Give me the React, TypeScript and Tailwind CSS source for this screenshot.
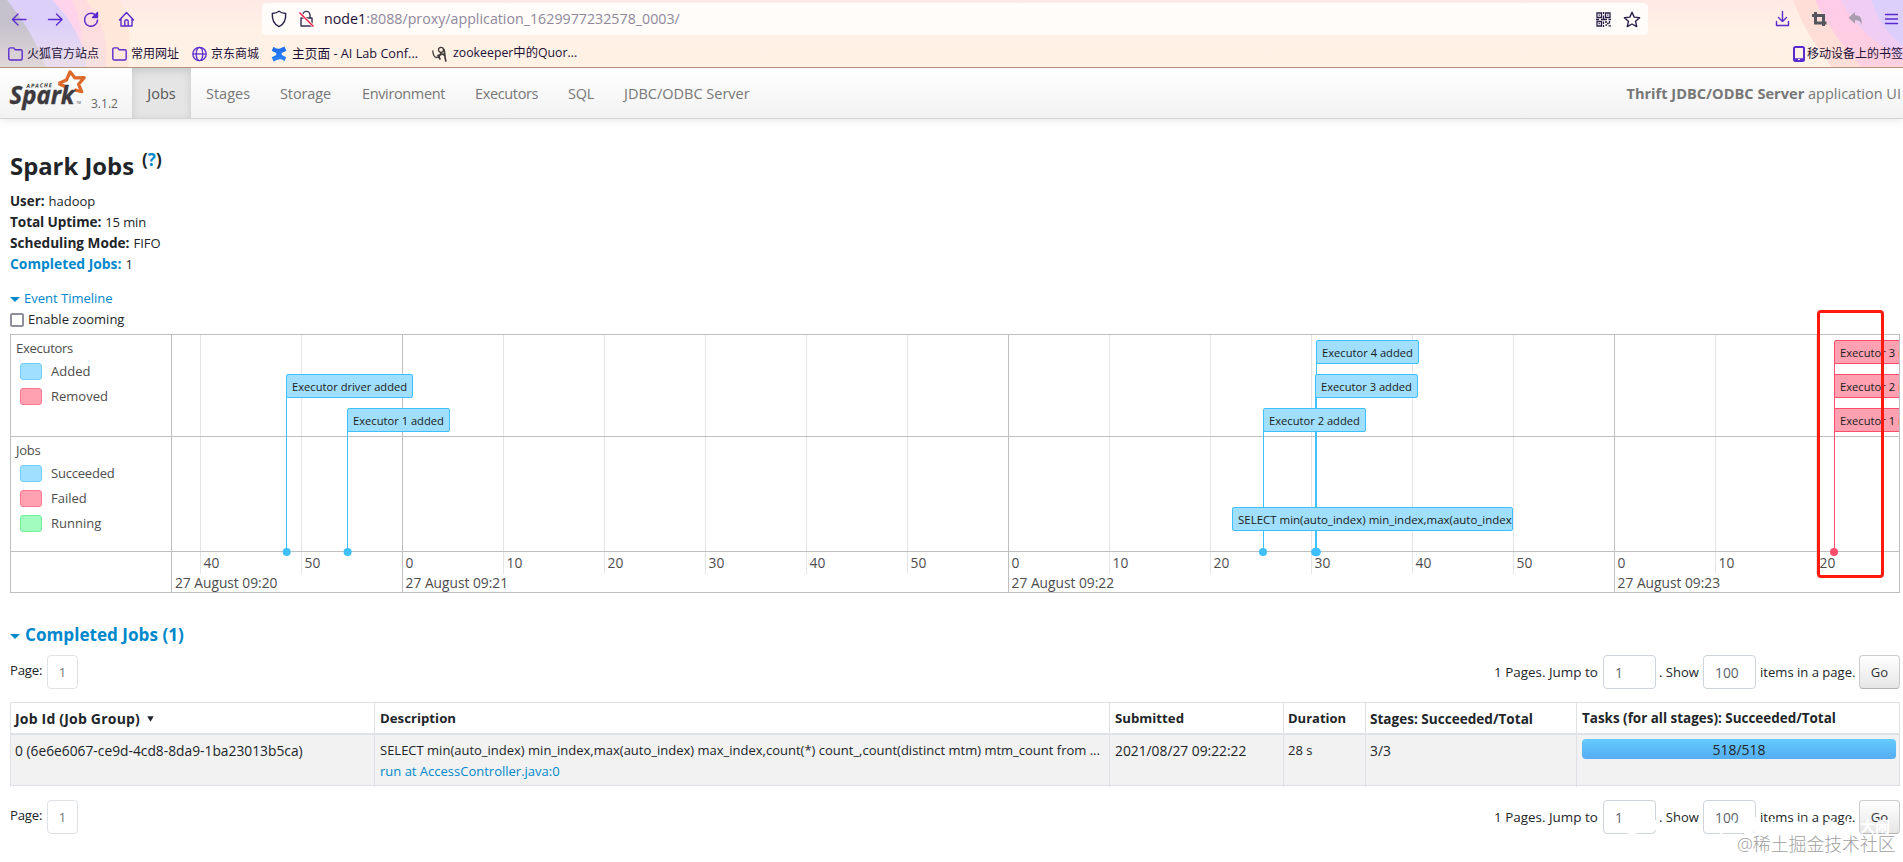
import React from 'react';

const SANS = `font-['Open_Sans','Noto_Sans_CJK_SC',sans-serif]`;

/* ---------- browser chrome ---------- */

function ChromeBackdrop() {
  return (
    <svg className="absolute inset-0" width="1903" height="67" viewBox="0 0 1903 67">
      <defs>
        <linearGradient id="base" x1="0" y1="0" x2="0" y2="1">
          <stop offset="0" stopColor="#ffe9e6" />
          <stop offset="0.45" stopColor="#fff1e5" />
          <stop offset="1" stopColor="#fff2e5" />
        </linearGradient>
        <linearGradient id="fade" x1="0" y1="0" x2="0" y2="1">
          <stop offset="0.35" stopColor="#f3e6df" stopOpacity="0" />
          <stop offset="1" stopColor="#f3e6df" stopOpacity="0.6" />
        </linearGradient>
        <linearGradient id="pinkR" x1="0" y1="0" x2="0" y2="1">
          <stop offset="0" stopColor="#ffcbe9" />
          <stop offset="1" stopColor="#ffd0de" />
        </linearGradient>
      </defs>
      <rect width="1903" height="67" fill="url(#base)" />
      <path d="M0 0H120Q134 34 128 67H0Z" fill="#ffe7d9" />
      <path d="M0 0H86Q112 34 105 67H0Z" fill="#ffdcdf" />
      <path d="M0 0H72Q84 26 84 67H0Z" fill="#ffd3ec" />
      <path d="M0 0H52Q82 30 87 67H0Z" fill="#dcd0fa" />
      <path d="M0 0H7Q32 30 46 67H0Z" fill="#c5c1cd" />
      <rect width="105" height="67" fill="url(#fade)" />
      <path d="M1793 0Q1806 36 1832 67H1903V0Z" fill="#ffded8" />
      <path d="M1815 0Q1832 36 1862 67H1903V0Z" fill="url(#pinkR)" />
      <path d="M1841 0Q1858 34 1903 60V0Z" fill="#f0cdf3" />
      <path d="M1871 0Q1882 30 1903 46V0Z" fill="#dccffb" />
    </svg>
  );
}

function ToolIcons() {
  return (
    <svg width="140" height="32" viewBox="0 0 140 32" fill="none" stroke="#5b2bcf" strokeWidth="1.4" strokeLinecap="round" strokeLinejoin="round">
      <path d="M26 16.5H12.5M18 11l-5.500 5.500L18 22" />
      <path d="M48.500 16.500H62M56.500 11l5.500 5.500-5.500 5.500" />
      <path d="M96.500 13.300A6.500 6.500 0 1 0 97.500 17" />
      <path d="M97.500 9.500v5h-5z" fill="#5b2bcf" />
      <path d="M119.500 17l7-7.500 7 7.500M121 15.500v7.500h11v-7.500M124.800 23v-4.500a1.700 1.700 0 0 1 3.400 0V23" />
    </svg>
  );
}

function AddressBar() {
  return (
    <div className="ml-[122px] flex h-8 w-[1386px] items-center rounded-[4px] bg-[#fffcf9]">
      <svg className="ml-[9px]" width="16" height="18" viewBox="0 0 16 18" fill="none" stroke="#2b1f4a" strokeWidth="1.400" strokeLinejoin="round">
        <path d="M8 1.200C6 2.700 4 3.200 1.300 3.500 1 10 3 14.500 8 16.600c5-2.100 7-6.600 6.700-13.100C12 3.200 10 2.700 8 1.200z" />
      </svg>
      <svg className="ml-[11px]" width="17" height="18" viewBox="0 0 17 18" fill="none">
        <path d="M4.800 8V5a3.600 3.600 0 0 1 7.200 0v3M3 8h11v8H3z" stroke="#3a2f55" strokeWidth="1.400" strokeLinejoin="round" />
        <path d="M1.500 2.500L15.500 16.500" stroke="#fffcf9" strokeWidth="3" />
        <path d="M1.500 2.500L15.500 16.500" stroke="#e8204c" strokeWidth="1.500" />
      </svg>
      <span className="ml-[9px] flex-1 text-[14.24px] leading-8 text-[#8f889c]">
        <span className="text-[#1c0f36]">node1</span>:8088/proxy/application_1629977232578_0003/
      </span>
      <svg width="15" height="15" viewBox="0 0 15 15" fill="none" stroke="#2b1f4a" strokeWidth="1.300">
        <path d="M1 1h4.500v4.500H1zM9.500 1H14v4.500H9.500zM1 9.500h4.500V14H1z" />
        <path d="M2.700 3.200h1.200M11.200 3.200h1.200M2.700 11.700h1.200M7.500 0v2M7.500 3.500V8M0 7.500h3M5 7.500h6M12.500 7.500H15M7.500 9.500V12M7.500 13v2M9 10h2M11 11.500h1.800M13.500 9v2.500M9.500 13h1.500M12.500 13.800H15" />
      </svg>
      <svg className="mr-[7px] ml-[12px]" width="18" height="17" viewBox="0 0 18 17" fill="none" stroke="#2b1f4a" strokeWidth="1.400" strokeLinejoin="round">
        <path d="M9 1.200l2.200 4.900 5.400.6-4 3.600 1.100 5.300L9 13l-4.700 2.600 1.100-5.300-4-3.600 5.400-.6z" />
      </svg>
    </div>
  );
}

function RightIcons() {
  return (
    <svg width="130" height="32" viewBox="0 0 130 32" fill="none">
      <g stroke="#5b2bcf" strokeWidth="1.400" strokeLinecap="round" strokeLinejoin="round">
        <path d="M9.500 8.500v10M5.500 14.500l4 4 4-4M3.500 18.500v4h12v-4" />
        <path d="M112.500 11.500h12M112.500 16h12M112.500 20.500h12" />
      </g>
      <path d="M42.500 9v11h11M39 12.500H50.500v10.500" stroke="#55555f" strokeWidth="3" />
      <path d="M82 9v3.200c5.500 0 7.500 3.200 6.500 9.800-.9-3.300-2.300-4.700-6.500-4.700v3.400l-6.500-5.900z" fill="#aa9db2" />
    </svg>
  );
}

function Folder({ className = '' }: { className?: string }) {
  return (
    <svg className={className} width="15" height="14" viewBox="0 0 15 14" fill="none" stroke="#5b2bcf" strokeWidth="1.400" strokeLinejoin="round">
      <path d="M.8 11.500v-9A1.600 1.600 0 0 1 2.400.9h3.200l1.700 1.900h5.400a1.500 1.500 0 0 1 1.500 1.500v7.200a1.500 1.500 0 0 1-1.500 1.500H2.300a1.500 1.500 0 0 1-1.500-1.500z" />
    </svg>
  );
}

function BrowserChrome() {
  return (
    <header className="relative h-[68px] w-full overflow-hidden border-b border-[#b5937f]">
      <ChromeBackdrop />
      <div className="relative flex h-[38px] pt-[3px]">
        <ToolIcons />
        <AddressBar />
        <div className="ml-[125px]">
          <RightIcons />
        </div>
      </div>
      <div className="relative flex h-[29px] items-center whitespace-nowrap pt-[2px] pl-2 text-[12px] text-[#1c0f36]">
        <Folder />
        <span className="ml-1">火狐官方站点</span>
        <Folder className="ml-[13px]" />
        <span className="ml-1">常用网址</span>
        <svg className="ml-[13px]" width="15" height="16" viewBox="0 0 15 16" fill="none" stroke="#5b2bcf" strokeWidth="1.300">
          <circle cx="7.500" cy="8" r="6.700" />
          <ellipse cx="7.500" cy="8" rx="3.300" ry="6.700" />
          <path d="M1 8h13" />
        </svg>
        <span className="ml-1">京东商城</span>
        <svg className="ml-[12px]" width="16" height="16" viewBox="0 0 16 16">
          <path d="M2.500 .8C5 2.700 7 3.200 9.500 2.200L13.500 .5l1.800 4.200C10.500 7.500 5.500 8 .8 4.800z" fill="#1f6ff0" />
          <path d="M13.500 15.200C11 13.300 9 12.800 6.500 13.800L2.500 15.500.7 11.300C5.500 8.500 10.500 8 15.200 11.200z" fill="#2a7ffb" />
          <path d="M4 5h8l-1.500 3 1.500 3H4l1.500-3z" fill="#2577f6" />
        </svg>
        <span className="ml-[5px] w-[140px] text-[12.700px]">主页面 - AI Lab Conf...</span>
        <svg width="15" height="16" viewBox="0 0 15 16" fill="none" stroke="#3f3a3a" strokeWidth="1.300" strokeLinecap="round">
          <path d="M.8 5c.3 4 1.500 6.300 3.700 6.500C7 11.500 8.500 9 8.800 6.500" />
          <circle cx="9" cy="3.800" r="2.500" />
          <path d="M7 9.500c2-1.500 4-1.500 5.200-.5M12 3.500c1 3 .3 6 1.800 11.500M6 9.500l2 3.500" strokeWidth="1.700" />
        </svg>
        <span className="ml-[6px] text-[12.300px]">zookeeper中的Quor...</span>
        <svg className="ml-auto" width="12" height="16" viewBox="0 0 12 16" fill="none">
          <rect x="1" y="1" width="10" height="14" rx="1.500" stroke="#5b2bcf" strokeWidth="2" />
          <path d="M1 13.500h10" stroke="#5b2bcf" strokeWidth="2.500" />
          <path d="M5 13.500h2" stroke="#fff" strokeWidth="1" />
        </svg>
        <span className="ml-[2px]">移动设备上的书签</span>
      </div>
    </header>
  );
}

/* ---------- application navbar ---------- */

function SparkLogo() {
  return (
    <svg width="80" height="50" viewBox="0 0 80 50" className="overflow-visible">
      <path
        d="M49.500 15.500L57.500 12L61 3.800L66 9.900L75.200 9.700L69.600 16.300L72.800 23.800L65.500 21.900M49.500 15.500L56.400 18.800L57.500 22.500"
        fill="none"
        stroke="#dd6a2a"
        strokeWidth="3.200"
        strokeLinejoin="round"
      />
      <text x="17.500" y="20" fontSize="5.600" fontWeight="700" fontStyle="italic" letterSpacing="0.900" fill="#3c3a3e" fontFamily="Open Sans" transform="rotate(-2 17 20)">APACHE</text>
      <text x="0.500" y="35.800" fontSize="25" fontWeight="700" fontStyle="italic" textLength="65" lengthAdjust="spacingAndGlyphs" fill="#3c3a3e" stroke="#3c3a3e" strokeWidth=".4" fontFamily="Open Sans">Spark</text>
      <text x="67.500" y="36" fontSize="3" fill="#3c3a3e" fontFamily="Open Sans">TM</text>
    </svg>
  );
}

function Navbar() {
  return (
    <nav className="flex h-[51px] border-b border-[#d4d4d4] bg-gradient-to-b from-white to-[#f2f2f2] text-[14.500px] leading-[51px] whitespace-nowrap text-[#777] shadow-[0_1px_10px_rgba(0,0,0,0.1)]">
      <div className="flex w-[132px] pl-[9px]">
        <SparkLogo />
        <span className="ml-[2px] pt-[10px] text-[12px] text-[#666]">3.1.2</span>
      </div>
      <span className="h-[50px] w-[59px] bg-[#e5e5e5] text-center text-[#555] shadow-[inset_0_3px_8px_rgba(0,0,0,0.125)]">Jobs</span>
      <span className="ml-[15px] w-[74px]">Stages</span>
      <span className="w-[82px] tracking-[-0.1px]">Storage</span>
      <span className="w-[113px] tracking-[-0.36px]">Environment</span>
      <span className="w-[93px] tracking-[-0.36px]">Executors</span>
      <span className="w-[56px] tracking-[-0.3px]">SQL</span>
      <span>JDBC/ODBC Server</span>
      <span className="mr-[2px] ml-auto">
        <b className="text-[14.600px] font-bold">Thrift JDBC/ODBC Server</b> application UI
      </span>
    </nav>
  );
}

/* ---------- event timeline ---------- */

// Plot area coordinates: x = 0 at the right edge of the label column, one minor tick is 10 s.
const STEP = 101;
const FIRST_TICK = 27.6;
const LABEL_GAP = 4;
const tickLabels = ['40', '50', '0', '10', '20', '30', '40', '50', '0', '10', '20', '30', '40', '50', '0', '10', '20'];
const majorTicks: Record<number, string> = { 2: '27 August 09:21', 8: '27 August 09:22', 14: '27 August 09:23' };

const blueItems = [
  { text: 'Executor 4 added', x: 1144, y: 5, w: 103 },
  { text: 'Executor 3 added', x: 1143, y: 39, w: 103 },
  { text: 'Executor driver added', x: 114, y: 39, w: 127 },
  { text: 'Executor 1 added', x: 175, y: 73, w: 103 },
  { text: 'Executor 2 added', x: 1091, y: 73, w: 103 },
];
const redItems = [
  { text: 'Executor 3 removed', y: 5 },
  { text: 'Executor 2 removed', y: 39 },
  { text: 'Executor 1 removed', y: 73 },
];

function Legend({ title, rows }: { title: string; rows: { label: string; swatch: string; spacing?: string }[] }) {
  return (
    <div className="pl-[5px] text-[13px] text-[#4d4d4d]">
      <div className="h-[24px] pt-[3px] leading-[21px] tracking-[-0.28px]">{title}</div>
      {rows.map((r) => (
        <div key={r.label} className="flex h-[25px] items-center pl-[4px] leading-[25px]">
          <span className={`mr-[9px] h-[17px] w-[22px] rounded-[3px] border ${r.swatch}`} />
          <span className={r.spacing}>{r.label}</span>
        </div>
      ))}
    </div>
  );
}

function Timeline() {
  return (
    <div className="relative mt-[4px] flex h-[259px] w-[1890px] border border-[#bfbfbf]">
      <div className="w-[161px] shrink-0 border-r border-[#bfbfbf]">
        <div className="h-[102px] border-b border-[#bfbfbf]">
          <Legend
            title="Executors"
            rows={[
              { label: 'Added', swatch: 'bg-[#a0dfff] border-[#6fcfff]' },
              { label: 'Removed', swatch: 'bg-[#ffa1b0] border-[#ff7790]' },
            ]}
          />
        </div>
        <div className="h-[115px] border-b border-[#bfbfbf]">
          <Legend
            title="Jobs"
            rows={[
              { label: 'Succeeded', swatch: 'bg-[#a0dfff] border-[#6fcfff]', spacing: 'tracking-[-0.2px]' },
              { label: 'Failed', swatch: 'bg-[#ffa1b0] border-[#ff7790]' },
              { label: 'Running', swatch: 'bg-[#a2fcc0] border-[#6ff29b]' },
            ]}
          />
        </div>
      </div>
      <div className="relative flex-1 overflow-hidden">
        <svg className="absolute inset-0" width="1727" height="257" viewBox="0 0 1727 257" shapeRendering="crispEdges">
          {tickLabels.map((_, i) => {
            const x = Math.round(FIRST_TICK + i * STEP);
            const major = i in majorTicks;
            return <rect key={i} x={x} y="0" width="1" height={major ? 257 : 239} fill={major ? '#bfbfbf' : '#e5e5e5'} />;
          })}
          <rect x="0" y="101" width="1727" height="1" fill="#bfbfbf" />
          <rect x="0" y="216" width="1727" height="1" fill="#bfbfbf" />
          <rect x="114" y="60" width="1" height="156" fill="#3ec0ff" />
          <rect x="175" y="90" width="1" height="126" fill="#3ec0ff" />
          <rect x="1091" y="90" width="1" height="126" fill="#3ec0ff" />
          <rect x="1144" y="20" width="1" height="196" fill="#3ec0ff" />
          <rect x="1143" y="60" width="1" height="156" fill="#3ec0ff" />
          <rect x="1662" y="20" width="1" height="196" fill="#ff4d6d" />
          <g shapeRendering="auto" fill="#3ec0ff">
            <circle cx="114.700" cy="217" r="4" />
            <circle cx="175.600" cy="217" r="4" />
            <circle cx="1091" cy="217" r="4" />
            <circle cx="1143.300" cy="217" r="4.200" />
            <circle cx="1144.700" cy="217" r="4.200" />
            <circle cx="1662" cy="217" r="4" fill="#ff4d6d" />
          </g>
        </svg>
        {tickLabels.map((t, i) => (
          <span key={i} className="absolute top-[217px] text-[13.800px] leading-[21px] text-[#4d4d4d]" style={{ left: FIRST_TICK + i * STEP + LABEL_GAP }}>
            {t}
          </span>
        ))}
        <span className="absolute top-[237px] left-[3px] text-[13.760px] leading-[21px] text-[#4d4d4d]">27 August 09:20</span>
        {Object.entries(majorTicks).map(([i, t]) => (
          <span key={i} className="absolute top-[237px] text-[13.760px] leading-[21px] text-[#4d4d4d]" style={{ left: FIRST_TICK + Number(i) * STEP + LABEL_GAP }}>
            {t}
          </span>
        ))}
        {blueItems.map((b) => (
          <div
            key={b.text}
            className="absolute h-[24px] rounded-[2px] border border-[#3ec0ff] bg-[#a0dfff] pl-[5px] text-[11.170px] leading-[24px] whitespace-nowrap text-[#1a1a1a]"
            style={{ left: b.x, top: b.y, width: b.w }}
          >
            {b.text}
          </div>
        ))}
        <div className="absolute top-[172px] left-[1060px] h-[24px] w-[281px] overflow-hidden rounded-[2px] border border-[#3ec0ff] bg-[#a0dfff] pl-[5px] text-[11.480px] leading-[24px] whitespace-nowrap text-[#1a1a1a]">
          SELECT min(auto_index) min_index,max(auto_index
        </div>
        {redItems.map((r) => (
          <div
            key={r.text}
            className="absolute left-[1662px] h-[24px] w-[120px] rounded-[2px] border border-[#ff4d6d] bg-[#ffa1b0] pl-[5px] text-[11.170px] leading-[24px] whitespace-nowrap text-[#1a1a1a]"
            style={{ top: r.y }}
          >
            {r.text}
          </div>
        ))}
      </div>
      <div className="absolute top-[-25px] left-[1806px] h-[268px] w-[67px] rounded-[4px] border-3 border-[#ff1a0d]" />
    </div>
  );
}

/* ---------- completed jobs ---------- */

function Pager({ className }: { className: string }) {
  return (
    <div className={`flex h-[34px] w-[1890px] text-[13px] whitespace-nowrap ${className}`}>
      <span className="w-[37px] pt-[5px] text-[13.200px] leading-[21px] tracking-[-0.2px]">Page:</span>
      <span className="h-[34px] w-[31px] rounded-[4px] border border-[#dee2e6] text-center leading-[33px] text-[#777]">1</span>
      <div className="ml-auto flex items-center leading-[34px]">
        <span className="w-[109px] text-[13.450px]">1 Pages. Jump to</span>
        <span className="h-[34px] w-[53px] rounded-[4px] border border-[#ced4da] pl-[11px] text-[13.800px] leading-[33px] text-[#5c636a]">1</span>
        <span className="w-[47px] pl-[3px]">. Show</span>
        <span className="h-[34px] w-[53px] rounded-[4px] border border-[#ced4da] pl-[11px] text-[13.800px] leading-[33px] text-[#5c636a]">100</span>
        <span className="w-[103px] pl-[4px] text-[13.070px]">items in a page.</span>
        <span className="h-[34px] w-[41px] rounded-[4px] border border-[#ccc] border-b-[#b3b3b3] bg-gradient-to-b from-white to-[#e6e6e6] text-center leading-[33px] text-[#333]">Go</span>
      </div>
    </div>
  );
}

const COLS = 'grid grid-cols-[364px_735px_174px_82px_211px_324px]';
const CELL = 'border-l border-[#dee2e6] py-[5px] pl-[4px]';

function JobsTable() {
  return (
    <div className="mt-[13px] w-[1890px] border-t border-r border-b border-[#dee2e6] text-[13px] leading-[21px] whitespace-nowrap">
      <div className={`${COLS} h-[32px] border-b-2 border-[#dee2e6] font-bold`}>
        <div className={`${CELL} flex text-[14px] tracking-[0.200px]`}>
          Job Id (Job Group)
          <svg className="mt-[8px] ml-[7px]" width="7" height="6" viewBox="0 0 7 6">
            <path d="M.3.300h6.400L3.500 5.800z" fill="#212529" />
          </svg>
        </div>
        <div className={`${CELL} pl-[5px] text-[13.220px]`}>Description</div>
        <div className={`${CELL} pl-[5px] text-[13.220px]`}>Submitted</div>
        <div className={CELL}>Duration</div>
        <div className={`${CELL} text-[13.570px]`}>Stages: Succeeded/Total</div>
        <div className={`${CELL} pl-[5px] text-[13.450px]`}>Tasks (for all stages): Succeeded/Total</div>
      </div>
      <div className={`${COLS} h-[50px] bg-[#f2f2f2]`}>
        <div className={`${CELL} text-[13.810px]`}>0 (6e6e6067-ce9d-4cd8-8da9-1ba23013b5ca)</div>
        <div className={`${CELL} pl-[5px]`}>
          <div>SELECT min(auto_index) min_index,max(auto_index) max_index,count(*) count_,count(distinct mtm) mtm_count from ...</div>
          <div className="text-[#0088cc]">run at AccessController.java:0</div>
        </div>
        <div className={`${CELL} pl-[5px] text-[13.810px]`}>2021/08/27 09:22:22</div>
        <div className={CELL}>28 s</div>
        <div className={`${CELL} text-[13.810px]`}>3/3</div>
        <div className={`${CELL} pt-[4px] pr-[4px] pl-[5px]`}>
          <div className="h-[20px] rounded-[4px] bg-gradient-to-b from-[#64cbff] to-[#54adf0] text-center text-[13.960px] leading-[22px]">518/518</div>
        </div>
      </div>
    </div>
  );
}

function Caret({ className }: { className: string }) {
  return (
    <svg className={className} width="10" height="5" viewBox="0 0 10 5">
      <path d="M0 0h10L5 5z" fill="#0088cc" />
    </svg>
  );
}

export default function App() {
  return (
    <div className={`relative h-[862px] w-[1903px] overflow-hidden bg-white text-[#212529] ${SANS}`}>
      <BrowserChrome />
      <Navbar />
      <main className="px-[10px] pt-[33px] text-[13px] leading-[21px]">
        <h3 className="flex h-[29px] text-[23.850px] leading-[29px] font-bold">
          Spark Jobs
          <sup className="top-0 ml-[8px] text-[17px] leading-[15px]">
            (<span className="text-[#0088cc]">?</span>)
          </sup>
        </h3>
        <ul className="mt-[9px]">
          <li className="flex h-[21px] items-baseline gap-[4px] pt-px">
            <b className="text-[13.360px]">User:</b>
            <span>hadoop</span>
          </li>
          <li className="flex h-[21px] items-baseline gap-[4px]">
            <b className="text-[13.630px] tracking-[-0.1px]">Total Uptime:</b>
            <span className="tracking-[-0.1px]">15 min</span>
          </li>
          <li className="flex h-[21px] items-baseline gap-[4px]">
            <b className="text-[13.630px]">Scheduling Mode:</b>
            <span>FIFO</span>
          </li>
          <li className="flex h-[21px] items-baseline gap-[4px]">
            <b className="text-[13.850px] text-[#0088cc]">Completed Jobs:</b>
            <span>1</span>
          </li>
        </ul>
        <div className="mt-[14px] flex text-[#0088cc]">
          <Caret className="mt-[9px] mr-[4px]" />
          <span>Event Timeline</span>
        </div>
        <div className="flex items-center">
          <span className="mr-[4px] h-[14px] w-[14px] rounded-[2px] border-2 border-[#8f8f9d] bg-white" />
          <span>Enable zooming</span>
        </div>
        <Timeline />
        <h4 className="mt-[30px] flex h-[24px] text-[17.140px] leading-[24px] font-bold text-[#0088cc]">
          <Caret className="mt-[11px] mr-[5px]" />
          Completed Jobs (1)
        </h4>
        <Pager className="mt-[8px]" />
        <JobsTable />
        <Pager className="mt-[14px]" />
      </main>
      <svg className="absolute top-[812px] left-[1620px]" width="240" height="26" viewBox="0 0 240 26" fill="none" stroke="#fff" strokeWidth="2.500">
        <path d="M8 22h8M36 8v10M40 13h8M56 9l10 3M70 20h10M92 14h12l-3 8M110 8l6 5M124 22h12M136 5v17M146 16h22M152 6v6M176 10l10 3M184 4v17M196 20h14M206 7l8 4M222 16h12M228 6v8" />
      </svg>
      <span className="absolute top-[815px] left-[1860px] text-[15px] leading-[22px] font-bold text-white">大闹</span>
      <span className="absolute top-[831px] left-[1737px] text-[17.870px] leading-[26px] font-light whitespace-nowrap text-[#a0a0a0] [text-shadow:1px_1px_0_#fff,-1px_-1px_0_#fff]">
        @稀土掘金技术社区
      </span>
    </div>
  );
}
